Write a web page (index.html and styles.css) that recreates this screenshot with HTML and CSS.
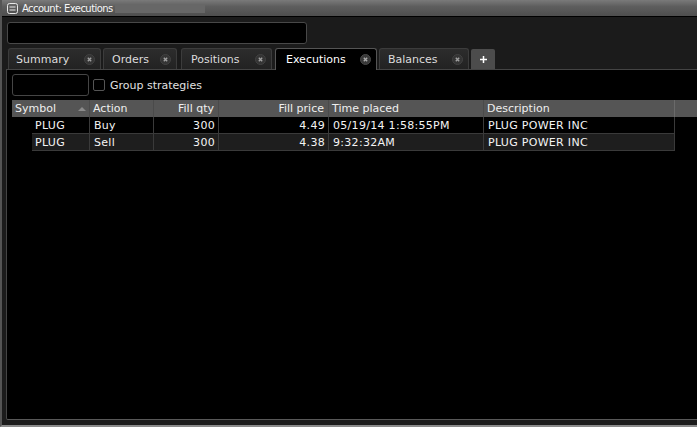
FILE: index.html
```html
<!DOCTYPE html>
<html>
<head>
<meta charset="utf-8">
<link rel="stylesheet" href="styles.css">
</head>
<body>
<div class="window">
  <div class="titlebar">
    <svg class="menu-icon" width="11" height="11" viewBox="0 0 11 11">
      <rect x="0.5" y="0.5" width="10" height="10" rx="2" fill="none" stroke="#e8e8e8" stroke-width="1"/>
      <line x1="2.5" y1="4" x2="8.5" y2="4" stroke="#e8e8e8" stroke-width="1"/>
      <line x1="2.5" y1="7" x2="8.5" y2="7" stroke="#e8e8e8" stroke-width="1"/>
    </svg>
    <span class="title">Account: Executions</span>
    <span class="title-blank"></span>
  </div>
  <div class="body">
    <div class="top-input"></div>
    <div class="tabs">
      <div class="tab tab-summary"><span>Summary</span><svg class="close" width="11" height="11" viewBox="0 0 11 11"><circle cx="5.5" cy="5.5" r="5" fill="#343434" stroke="#424242" stroke-width="1"/><path d="M3.8 3.8 L7.2 7.2 M7.2 3.8 L3.8 7.2" stroke="#a0a0a0" stroke-width="1.4"/></svg></div>
      <div class="tab tab-orders"><span>Orders</span><svg class="close" width="11" height="11" viewBox="0 0 11 11"><circle cx="5.5" cy="5.5" r="5" fill="#343434" stroke="#424242" stroke-width="1"/><path d="M3.8 3.8 L7.2 7.2 M7.2 3.8 L3.8 7.2" stroke="#a0a0a0" stroke-width="1.4"/></svg></div>
      <div class="tab tab-positions"><span>Positions</span><svg class="close" width="11" height="11" viewBox="0 0 11 11"><circle cx="5.5" cy="5.5" r="5" fill="#343434" stroke="#424242" stroke-width="1"/><path d="M3.8 3.8 L7.2 7.2 M7.2 3.8 L3.8 7.2" stroke="#a0a0a0" stroke-width="1.4"/></svg></div>
      <div class="tab tab-executions active"><span>Executions</span><svg class="close" width="11" height="11" viewBox="0 0 11 11"><circle cx="5.5" cy="5.5" r="5" fill="#383838" stroke="#484848" stroke-width="1"/><path d="M3.8 3.8 L7.2 7.2 M7.2 3.8 L3.8 7.2" stroke="#aaaaaa" stroke-width="1.4"/></svg></div>
      <div class="tab tab-balances"><span>Balances</span><svg class="close" width="11" height="11" viewBox="0 0 11 11"><circle cx="5.5" cy="5.5" r="5" fill="#343434" stroke="#424242" stroke-width="1"/><path d="M3.8 3.8 L7.2 7.2 M7.2 3.8 L3.8 7.2" stroke="#a0a0a0" stroke-width="1.4"/></svg></div>
      <div class="tab-add"><svg width="9" height="9" viewBox="0 0 9 9"><path d="M4.5 1 V8 M1 4.5 H8" stroke="#ffffff" stroke-width="1.5"/></svg></div>
    </div>
    <div class="panel">
      <div class="filter-row">
        <div class="filter-input"></div>
        <div class="checkbox"></div>
        <span class="check-label">Group strategies</span>
      </div>
      <div class="grid">
        <div class="hcell">Symbol<span class="sort"></span></div>
        <div class="hcell">Action</div>
        <div class="hcell right">Fill qty</div>
        <div class="hcell right">Fill price</div>
        <div class="hcell">Time placed</div>
        <div class="hcell">Description</div>
        <div class="hcell filler"></div>

        <div class="cell sym r1">PLUG</div>
        <div class="cell r1">Buy</div>
        <div class="cell right r1">300</div>
        <div class="cell right r1">4.49</div>
        <div class="cell r1">05/19/14 1:58:55PM</div>
        <div class="cell r1">PLUG POWER INC</div>
        <div class="blank"></div>

        <div class="cell sym r2">PLUG</div>
        <div class="cell r2">Sell</div>
        <div class="cell right r2">300</div>
        <div class="cell right r2">4.38</div>
        <div class="cell r2">9:32:32AM</div>
        <div class="cell r2">PLUG POWER INC</div>
        <div class="blank"></div>
      </div>
    </div>
  </div>
</div>
</body>
</html>
```
FILE: styles.css
```css
* { box-sizing: border-box; }
html, body {
  margin: 0;
  padding: 0;
  width: 697px;
  height: 427px;
  overflow: hidden;
  background: #1b1b1b;
  font-family: "DejaVu Sans", Verdana, sans-serif;
  font-size: 11px;
  color: #e6e6e6;
}
.window {
  width: 697px;
  height: 427px;
  border-left: 2px solid #555;
  border-bottom: 2px solid #8a8a8a;
  display: flex;
  flex-direction: column;
}
.titlebar {
  height: 17px;
  flex: none;
  background: linear-gradient(#7a7a7a, #5e5e5e 40%, #4e4e4e);
  border-bottom: 1px solid #000;
  display: flex;
  align-items: center;
  padding-left: 5px;
}
.menu-icon { flex: none; }
.title {
  margin-left: 4px;
  font-size: 10px;
  color: #f6f6f6;
  letter-spacing: -0.55px;
}
.title-blank {
  margin-left: 2px;
  width: 90px;
  height: 9px;
  background: #676767;
}
.body {
  flex: 1;
  display: flex;
  flex-direction: column;
  padding: 5px 0 5px 4px;
}
.top-input {
  width: 300px;
  height: 22px;
  margin-left: 1px;
  background: #000;
  border: 1px solid #484848;
  border-radius: 3px;
  flex: none;
}
.tabs {
  display: flex;
  align-items: flex-end;
  margin-top: 4px;
  padding-left: 2px;
  height: 21px;
  flex: none;
  position: relative;
  z-index: 1;
}
.tab {
  height: 21px;
  display: flex;
  align-items: center;
  justify-content: space-between;
  padding: 0 5px 0 7px;
  background: linear-gradient(#2c2c2c, #222);
  border: 1px solid #3c3c3c;
  border-bottom: none;
  border-radius: 3px 3px 0 0;
  color: #dcdcdc;
  flex: none;
}
.tab span { padding-top: 1px; }
.tab-summary { width: 93px; margin-right: 2px; }
.tab-orders { width: 74px; margin-right: 4px; padding-left: 8px; }
.tab-positions { width: 91px; margin-right: 3px; padding-left: 9px; }
.tab-executions { width: 102px; margin-right: 2px; padding-left: 10px; }
.tab-balances { width: 90px; margin-right: 2px; padding-left: 8px; }
.tab.active {
  background: #000;
  border-color: #555;
  color: #fff;
  height: 22px;
  margin-bottom: -1px;
  padding-bottom: 1px;
}
.tab-add {
  width: 24px;
  height: 20px;
  background: #4c4c4c;
  display: flex;
  align-items: center;
  justify-content: center;
  border-radius: 2px 2px 0 0;
}
.close { flex: none; }
.panel {
  flex: 1;
  background: #000;
  border-top: 1px solid #444;
  border-left: 1px solid #454545;
  border-bottom: 1px solid #585858;
  border-bottom-left-radius: 2px;
  padding: 4px 0 0 5px;
  display: flex;
  flex-direction: column;
}
.filter-row {
  display: flex;
  align-items: center;
  height: 22px;
}
.filter-input {
  width: 77px;
  height: 22px;
  border: 1px solid #454545;
  border-radius: 3px;
  background: #000;
}
.checkbox {
  width: 12px;
  height: 12px;
  margin-left: 4px;
  border: 1px solid #555;
  border-radius: 2px;
}
.check-label {
  margin-left: 5px;
  color: #e0e0e0;
}
.grid {
  margin-top: 4px;
  display: grid;
  grid-template-columns: 78px 64px 65px 110px 155px 191px 1fr;
  grid-template-rows: 17px 17px 17px;
}
.hcell {
  background: #555;
  border-right: 1px solid #4a4a4a;
  display: flex;
  align-items: center;
  padding: 0 4px 0 3px;
  color: #efefef;
  position: relative;
}
.hcell:nth-child(6) { border-right-color: #6a6a6a; }
.hcell.filler { border-right: none; }
.right { justify-content: flex-end; }
.sort {
  position: absolute;
  right: 3px;
  top: 7px;
  width: 0;
  height: 0;
  border-left: 4px solid transparent;
  border-right: 4px solid transparent;
  border-bottom: 4px solid #8a8a8a;
}
.cell {
  display: flex;
  align-items: center;
  padding: 0 4px;
  border-right: 1px solid #3a3a3a;
  border-bottom: 1px solid #3a3a3a;
  color: #f4f4f4;
  letter-spacing: 0.3px;
}
.cell.right { padding-right: 3px; }
.cell.r2 { background: #1e1e1e; }
.cell.sym {
  padding-left: 23px;
  border-bottom: none;
  background-image: linear-gradient(#3a3a3a, #3a3a3a);
  background-size: calc(100% - 20px) 1px;
  background-position: right bottom;
  background-repeat: no-repeat;
}
.cell.sym.r2 {
  background: linear-gradient(#3a3a3a, #3a3a3a) right bottom / calc(100% - 20px) 1px no-repeat,
              linear-gradient(to right, #000 20px, #1e1e1e 20px);
}
.blank { background: #000; }
```
